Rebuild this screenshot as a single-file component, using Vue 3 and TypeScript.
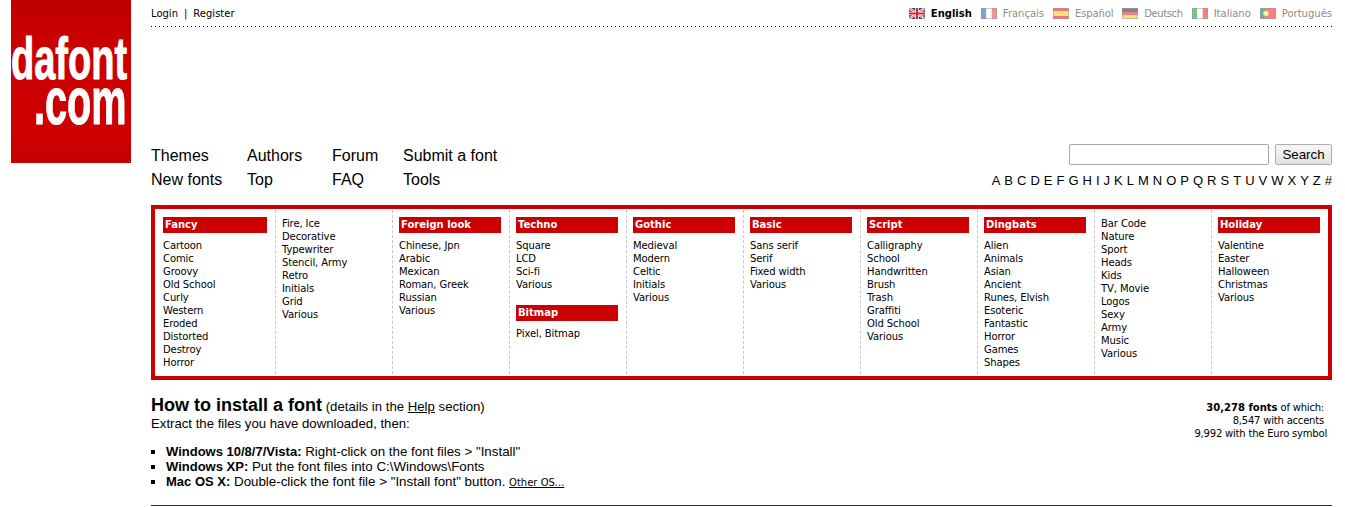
<script setup lang="ts">
interface Block { title?: string; items: string[]; title2?: string; items2?: string[] }
const columns: Block[] = [
  { title: 'Fancy', items: ['Cartoon','Comic','Groovy','Old School','Curly','Western','Eroded','Distorted','Destroy','Horror'] },
  { items: ['Fire, Ice','Decorative','Typewriter','Stencil, Army','Retro','Initials','Grid','Various'] },
  { title: 'Foreign look', items: ['Chinese, Jpn','Arabic','Mexican','Roman, Greek','Russian','Various'] },
  { title: 'Techno', items: ['Square','LCD','Sci-fi','Various'], title2: 'Bitmap', items2: ['Pixel, Bitmap'] },
  { title: 'Gothic', items: ['Medieval','Modern','Celtic','Initials','Various'] },
  { title: 'Basic', items: ['Sans serif','Serif','Fixed width','Various'] },
  { title: 'Script', items: ['Calligraphy','School','Handwritten','Brush','Trash','Graffiti','Old School','Various'] },
  { title: 'Dingbats', items: ['Alien','Animals','Asian','Ancient','Runes, Elvish','Esoteric','Fantastic','Horror','Games','Shapes'] },
  { items: ['Bar Code','Nature','Sport','Heads','Kids','TV, Movie','Logos','Sexy','Army','Music','Various'] },
  { title: 'Holiday', items: ['Valentine','Easter','Halloween','Christmas','Various'] },
]
const letters = 'A B C D E F G H I J K L M N O P Q R S T U V W X Y Z #'.split(' ')
const langs = [
  { name: 'Français', stripes: ['#3a5fb0','#ffffff','#e84a4a'], dir: 'v' },
  { name: 'Español', stripes: ['#e0221c','#fbd21e','#e0221c'], dir: 'h' },
  { name: 'Deutsch', stripes: ['#333333','#d9332b','#f7d038'], dir: 'h' },
  { name: 'Italiano', stripes: ['#1f9e3c','#ffffff','#f02c2c'], dir: 'v' },
  { name: 'Português', stripes: ['#1f7d32','#f02c2c','#f02c2c'], dir: 'p' },
]
</script>

<template>
  <div class="page">
    <aside class="logo">
      <span class="logo-top">dafont</span>
      <span class="logo-bottom">.com</span>
    </aside>
    <main class="main">
      <div class="topbar">
        <div class="login"><a>Login</a><span class="sep">|</span><a>Register</a></div>
        <div class="langs">
          <span class="lang active">
            <svg class="flag" viewBox="0 0 16 11">
              <rect width="16" height="11" fill="#2b3f8f"/>
              <path d="M0 0L16 11M16 0L0 11" stroke="#fff" stroke-width="2.4"/>
              <path d="M0 0L16 11M16 0L0 11" stroke="#d8232a" stroke-width="0.8"/>
              <path d="M8 0V11M0 5.5H16" stroke="#fff" stroke-width="3.6"/>
              <path d="M8 0V11M0 5.5H16" stroke="#d8232a" stroke-width="2"/>
            </svg>
            English
          </span>
          <span v-for="l in langs" :key="l.name" class="lang">
            <svg class="flag dim" viewBox="0 0 16 11">
              <template v-if="l.dir === 'v'">
                <rect width="5.4" height="11" :fill="l.stripes[0]"/>
                <rect x="5.4" width="5.3" height="11" :fill="l.stripes[1]"/>
                <rect x="10.7" width="5.3" height="11" :fill="l.stripes[2]"/>
              </template>
              <template v-else-if="l.dir === 'h'">
                <template v-if="l.name === 'Deutsch'">
                  <rect width="16" height="4" fill="#333333"/>
                  <rect y="4" width="16" height="3.5" fill="#d9332b"/>
                  <rect y="7.5" width="16" height="3.5" fill="#f7d038"/>
                </template>
                <template v-else>
                  <rect width="16" height="3" :fill="l.stripes[0]"/>
                  <rect y="3" width="16" height="5" :fill="l.stripes[1]"/>
                  <rect y="8" width="16" height="3" :fill="l.stripes[2]"/>
                </template>
              </template>
              <template v-else>
                <rect width="16" height="11" fill="#f02c2c"/>
                <rect width="6" height="11" fill="#1f7d32"/>
                <circle cx="6" cy="5.5" r="2.8" fill="#f7d038"/>
                <circle cx="6" cy="5.5" r="1.3" fill="#fff"/>
              </template>
              <rect x=".5" y=".5" width="15" height="10" fill="none" stroke="#555" stroke-opacity=".5"/>
            </svg>
            {{ l.name }}
          </span>
        </div>
      </div>

      <div class="nav-row">
        <nav class="nav">
          <div class="nav-col"><a>Themes</a><a>New fonts</a></div>
          <div class="nav-col"><a>Authors</a><a>Top</a></div>
          <div class="nav-col"><a>Forum</a><a>FAQ</a></div>
          <div class="nav-col"><a>Submit a font</a><a>Tools</a></div>
        </nav>
        <div class="search">
          <div class="search-form">
            <input class="search-input" type="text" />
            <button class="search-btn" type="button">Search</button>
          </div>
          <div class="alpha"><a v-for="c in letters" :key="c">{{ c }}</a></div>
        </div>
      </div>

      <section class="menu">
        <div v-for="(col, i) in columns" :key="i" class="col">
          <div v-if="col.title" class="cat">{{ col.title }}</div>
          <a v-for="it in col.items" :key="it" class="item">{{ it }}</a>
          <template v-if="col.title2">
            <div class="cat second">{{ col.title2 }}</div>
            <a v-for="it in col.items2" :key="it" class="item">{{ it }}</a>
          </template>
        </div>
      </section>

      <section class="howto">
        <div class="howto-text">
          <p class="howto-head"><strong class="howto-title">How to install a font</strong> (details in the <a class="ul">Help</a> section)</p>
          <p>Extract the files you have downloaded, then:</p>
          <ul class="list">
            <li><b>Windows 10/8/7/Vista:</b> Right-click on the font files &gt; "Install"</li>
            <li><b>Windows XP:</b> Put the font files into C:\Windows\Fonts</li>
            <li><b>Mac OS X:</b> Double-click the font file &gt; "Install font" button. <a class="ul other">Other OS...</a></li>
          </ul>
        </div>
        <div class="stats">
          <div class="inset"><b>30,278 fonts</b> of which:</div>
          <div class="inset">8,547 with accents</div>
          <div>9,992 with the Euro symbol</div>
        </div>
      </section>
      <div class="rule"></div>
    </main>
  </div>
</template>

<style>
html, body { margin: 0; background: #fff; }
</style>

<style scoped>
.page { display: flex; align-items: flex-start; height: 507px; overflow: hidden; padding-left: 11px; box-sizing: border-box; font-family: "DejaVu Sans", sans-serif; color: #000; }
.logo { width: 120px; height: 163px; flex: none; background: linear-gradient(#c00000, #cc0000 30%, #cc0000 85%, #c40000); color: #fff; display: flex; flex-direction: column; align-items: flex-start; font-family: "Liberation Sans", sans-serif; font-weight: 700; overflow: hidden; }
.logo-top { font-size: 58px; line-height: 40px; margin-top: 38px; width: 177px; flex: none; transform-origin: 0 0; transform: scale(.655, 1.03); white-space: nowrap; -webkit-text-stroke: 1px #fff; }
.logo-bottom { font-size: 64px; line-height: 44px; margin-left: 23px; width: 150px; flex: none; transform-origin: 0 0; transform: scale(.62, 1.05); white-space: nowrap; -webkit-text-stroke: 1px #fff; }
.main { width: 1181px; margin-left: 20px; flex: none; }
.topbar { display: flex; justify-content: space-between; height: 27px; background: linear-gradient(to right, #000 1px, transparent 1px) 0 100% / 4px 1px repeat-x; font-size: 10px; line-height: 27px; }
.login .sep { margin: 0 6px; }
.langs { display: flex; gap: 9px; color: #8c8c8c; }
.lang { display: inline-flex; align-items: center; gap: 6px; }
.lang.active { color: #000; font-weight: 700; }
.lang:nth-child(3) { letter-spacing: -.15px; }
.lang:nth-child(4) { letter-spacing: -.4px; }
.flag { width: 16px; height: 11px; flex: none; margin-top: -1px; }
.flag.dim { opacity: .6; }
.nav-row { display: flex; justify-content: space-between; margin-top: 117px; font-family: "Liberation Sans", sans-serif; }
.nav { display: flex; font-size: 16px; line-height: 24px; }
.nav-col { display: flex; flex-direction: column; }
.nav-col:nth-child(1) { width: 96px; }
.nav-col:nth-child(2) { width: 85px; }
.nav-col:nth-child(3) { width: 71px; }
.search { display: flex; flex-direction: column; align-items: flex-end; }
.search-form { display: flex; gap: 6px; height: 21px; }
.search-input { width: 200px; height: 21px; box-sizing: border-box; border: 1px solid #a9a9a9; border-radius: 2px; padding: 0; margin: 0; background: #fff; }
.search-btn { width: 57px; height: 21px; box-sizing: border-box; padding: 0; border: 1px solid #adadad; border-radius: 2px; background: linear-gradient(#f6f6f6, #e2e2e2); font: 13.3px "Liberation Sans", sans-serif; color: #000; }
.alpha { display: flex; gap: 4px; margin-top: 8px; font-size: 13px; line-height: 15px; }
.menu { display: grid; grid-template-columns: 120px repeat(9, 117px); margin-top: 13px; height: 175px; box-sizing: border-box; border: 4px solid #cc0000; font-size: 10px; line-height: 13px; letter-spacing: -.1px; padding: 1px 0 2px; }
.col { padding: 7px 8px 0 6px; border-left: 1px dashed #c8c8c8; display: flex; flex-direction: column; }
.col:first-child { border-left: 0; padding-left: 8px; }
.cat { background: #cc0000; color: #fff; font-weight: 700; line-height: 16px; padding-left: 2px; margin-bottom: 6px; letter-spacing: 0; }
.cat.second { margin-top: 14px; }
.item { display: block; white-space: nowrap; }
.howto { display: flex; justify-content: space-between; margin-top: 16px; font-family: "Liberation Sans", sans-serif; font-size: 13.2px; line-height: 15px; }
.howto p { margin: 0; }
.howto-head { line-height: 18px; }
.howto-title { font-size: 18px; }
.ul { text-decoration: underline; }
.list { margin: 13px 0 0; padding: 0 0 0 15px; list-style: square; font-size: 13.33px; }
.list b { font-size: 13px; }
.other { font-family: "DejaVu Sans", sans-serif; font-size: 10px; }
.stats { text-align: right; font-family: "DejaVu Sans", sans-serif; font-size: 10px; line-height: 13px; letter-spacing: -.2px; padding-top: 5px; padding-right: 5px; }
.stats b { letter-spacing: 0; }
.inset { margin-right: 3px; }
.rule { height: 1px; background: #a80000; margin-top: 15px; }
</style>
